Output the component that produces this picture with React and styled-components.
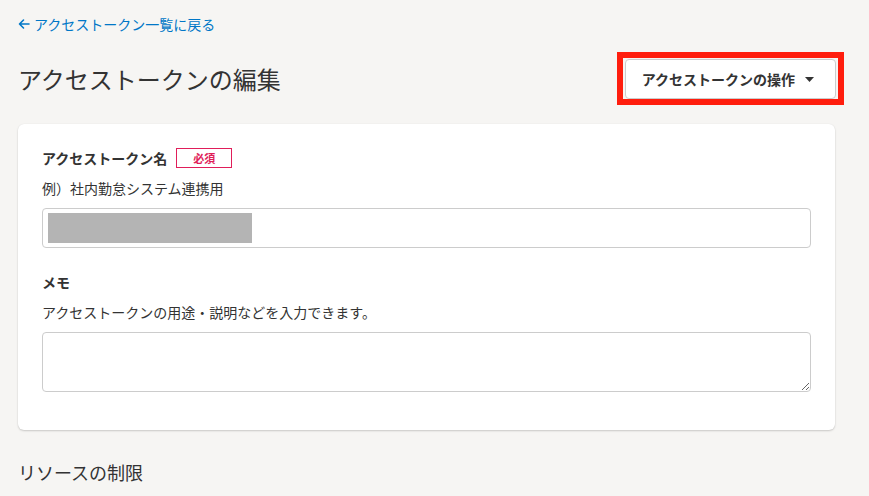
import React from 'react';
import styled, { createGlobalStyle } from 'styled-components';

const GlobalStyle = createGlobalStyle`
  body {
    margin: 0;
    background: #f6f5f3;
    font-family: "Noto Sans CJK JP", "Noto Sans", sans-serif;
    color: #333;
  }
`;

const Page = styled.div`
  width: 817px;
  padding: 14px 0 0 18px;
`;

const BackLink = styled.a`
  display: flex;
  align-items: center;
  gap: 4px;
  width: fit-content;
  height: 20px;
  font-size: 14px;
  line-height: 20px;
  color: #0077c7;
  text-decoration: none;
  cursor: pointer;

  svg {
    flex-shrink: 0;
  }
`;

const Header = styled.div`
  display: flex;
  align-items: center;
  justify-content: space-between;
  margin: 18px -9px 0 0;
`;

const Title = styled.h1`
  margin: 0;
  font-size: 24px;
  font-weight: normal;
  line-height: 40px;
  color: #333;
`;

// red frame drawn around the actions menu
const Highlight = styled.div`
  display: flex;
  padding: 1px 2px 0 2px;
  border: 6px solid #ff1d0d;
`;

const ActionButton = styled.button`
  display: inline-flex;
  align-items: center;
  gap: 10px;
  height: 40px;
  padding: 0 21px 0 16px;
  background: #fff;
  border: 1px solid #cccccc;
  border-radius: 4px;
  font-family: inherit;
  font-size: 14px;
  font-weight: bold;
  color: #333;
  cursor: pointer;
`;

const Card = styled.section`
  margin-top: 19px;
  padding: 24px 24px 38px;
  background: #fff;
  border-radius: 6px;
  box-shadow: 0 1px 2px rgba(0, 0, 0, 0.18), 0 0 1px rgba(0, 0, 0, 0.08);
`;

const Field = styled.div`
  & + & {
    margin-top: 24px;
  }
`;

const LabelRow = styled.div`
  display: flex;
  align-items: center;
  gap: 9px;
  height: 20px;
`;

const Label = styled.label`
  font-size: 14px;
  font-weight: bold;
  color: #333;
`;

const RequiredBadge = styled.span`
  display: inline-flex;
  align-items: center;
  justify-content: center;
  box-sizing: border-box;
  width: 56px;
  height: 20px;
  border: 1px solid #e01e5a;
  font-size: 11px;
  font-weight: bold;
  color: #e01e5a;
`;

const Hint = styled.p`
  margin: 10px 0 9px;
  font-size: 14px;
  line-height: 21px;
  color: #333;
`;

const TextInput = styled.div`
  box-sizing: border-box;
  height: 40px;
  padding: 4px 5px;
  border: 1px solid #cccccc;
  border-radius: 4px;
  background: #fff;
`;

const Masked = styled.div`
  width: 204px;
  height: 30px;
  background: #b4b4b4;
`;

const TextArea = styled.textarea`
  display: block;
  box-sizing: border-box;
  width: 100%;
  height: 60px;
  margin: 0;
  border: 1px solid #cccccc;
  border-radius: 4px;
  font-family: inherit;
  font-size: 14px;
  resize: vertical;
`;

const SectionTitle = styled.h2`
  margin: 29px 0 0;
  font-size: 18px;
  font-weight: normal;
  line-height: 27px;
  color: #333;
`;

const ArrowLeft = () => (
  <svg width="12" height="12" viewBox="0 0 12 12" fill="none" stroke="currentColor" strokeWidth="1.6">
    <path d="M11 6H1.5M5.5 2L1.5 6l4 4" strokeLinecap="round" strokeLinejoin="round" />
  </svg>
);

const Caret = () => (
  <svg width="9" height="5" viewBox="0 0 9 5">
    <path d="M0 0h9L4.5 5z" fill="#333" />
  </svg>
);

const App = () => (
  <>
    <GlobalStyle />
    <Page>
      <BackLink>
        <ArrowLeft />
        アクセストークン一覧に戻る
      </BackLink>

      <Header>
        <Title>アクセストークンの編集</Title>
        <Highlight>
          <ActionButton>
            アクセストークンの操作
            <Caret />
          </ActionButton>
        </Highlight>
      </Header>

      <Card>
        <Field>
          <LabelRow>
            <Label>アクセストークン名</Label>
            <RequiredBadge>必須</RequiredBadge>
          </LabelRow>
          <Hint>例）社内勤怠システム連携用</Hint>
          <TextInput>
            <Masked />
          </TextInput>
        </Field>

        <Field>
          <LabelRow>
            <Label>メモ</Label>
          </LabelRow>
          <Hint>アクセストークンの用途・説明などを入力できます。</Hint>
          <TextArea />
        </Field>
      </Card>

      <SectionTitle>リソースの制限</SectionTitle>
    </Page>
  </>
);

export default App;
